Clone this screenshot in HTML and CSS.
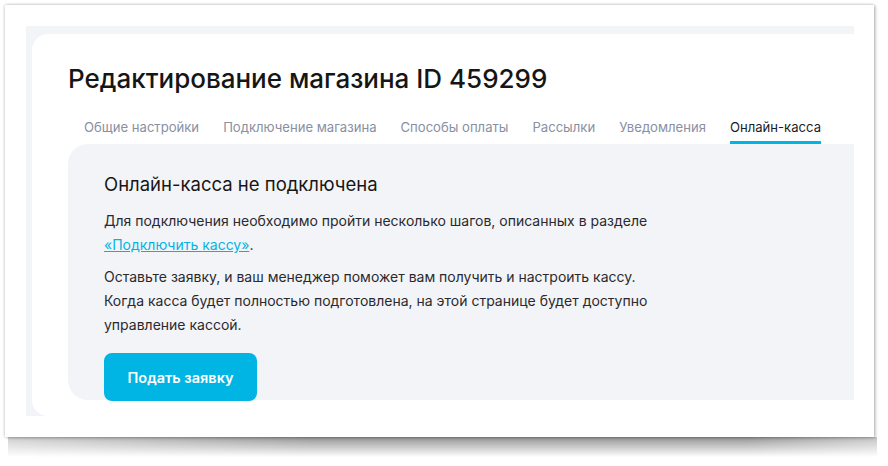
FILE: index.html
```html
<!DOCTYPE html>
<html lang="ru">
<head>
<meta charset="utf-8">
<link rel="stylesheet" href="styles.css">
</head>
<body>
<div class="paper">
  <div class="shot">
    <div class="card">
      <h1 class="title">Редактирование магазина ID 459299</h1>
      <nav class="tabs">
        <span class="tab">Общие настройки</span>
        <span class="tab">Подключение магазина</span>
        <span class="tab">Способы оплаты</span>
        <span class="tab">Рассылки</span>
        <span class="tab">Уведомления</span>
        <span class="tab tab-active">Онлайн-касса</span>
      </nav>
      <section class="panel">
        <h2 class="panel-title">Онлайн-касса не подключена</h2>
        <p class="text">Для подключения необходимо пройти несколько шагов, описанных в разделе<br><a class="link" href="#">«Подключить кассу»</a>.</p>
        <p class="text">Оставьте заявку, и ваш менеджер поможет вам получить и настроить кассу.<br>Когда касса будет полностью подготовлена, на этой странице будет доступно<br>управление кассой.</p>
        <button class="btn">Подать заявку</button>
      </section>
    </div>
  </div>
</div>
</body>
</html>
```
FILE: styles.css
```css
html {
  margin: 0;
  padding: 0;
  background: #fff;
}
body {
  margin: 0;
  padding: 0;
  width: 888px;
  height: 466px;
  overflow: hidden;
  font-family: Inter, "Noto Sans", sans-serif;
  color: #1c1c1e;
}
.paper {
  position: relative;
  margin: 5px 0 0 5px;
  width: 869px;
  height: 432px;
  box-sizing: border-box;
  padding: 21px 20px 21px 21px;
  background: #fff;
  box-shadow: 0 0 3px rgba(0, 0, 0, 0.3), 2px 1px 3px rgba(0, 0, 0, 0.15);
}
.paper::after {
  content: "";
  position: absolute;
  left: 3px;
  right: -3px;
  top: 100%;
  height: 20px;
  background: linear-gradient(to bottom, rgba(0, 0, 0, 0.42), rgba(0, 0, 0, 0.25) 40%, rgba(0, 0, 0, 0));
  -webkit-mask-image: linear-gradient(to right, rgba(0,0,0,0.45), #000 35%, #000 85%, rgba(0,0,0,0.55));
  mask-image: linear-gradient(to right, rgba(0,0,0,0.45), #000 35%, #000 85%, rgba(0,0,0,0.55));
  z-index: -1;
}
.shot {
  width: 828px;
  height: 390px;
  box-sizing: border-box;
  padding: 8px 0 0 6px;
  background: #f3f4f8;
  overflow: hidden;
}
.card {
  width: 880px;
  height: 382px;
  box-sizing: border-box;
  padding: 0 0 0 36px;
  background: #fff;
  border-radius: 16px 0 0 16px;
}
.title {
  margin: 0;
  padding-top: 28px;
  font-size: 26px;
  line-height: 34px;
  font-weight: 500;
  color: #161616;
}
.tabs {
  display: flex;
  gap: 24px;
  padding-left: 16px;
  margin-top: 21px;
}
.tab {
  font-size: 13.1px;
  line-height: 20px;
  padding-bottom: 4px;
  color: #8890a2;
  border-bottom: 3px solid transparent;
}
.tab-active {
  color: #1c1c1e;
  border-bottom-color: #00b4e4;
}
.panel {
  height: 256px;
  box-sizing: border-box;
  padding: 27px 0 0 36px;
  background: #f3f4f8;
  border-radius: 20px 0 0 20px;
}
.panel-title {
  margin: 0 0 12px;
  font-size: 18.5px;
  line-height: 26px;
  font-weight: 400;
  color: #161616;
}
.text {
  margin: 0 0 8px;
  font-size: 14px;
  line-height: 24px;
  color: #2a2a2e;
}
.link {
  color: #00b4e4;
  text-decoration: underline;
}
.btn {
  display: block;
  margin-top: 16px;
  width: 153px;
  height: 48px;
  border: 0;
  border-radius: 8px;
  background: #00b5e4;
  color: #fff;
  font-family: Inter, "Noto Sans", sans-serif;
  font-size: 14.5px;
  font-weight: 600;
}
```
